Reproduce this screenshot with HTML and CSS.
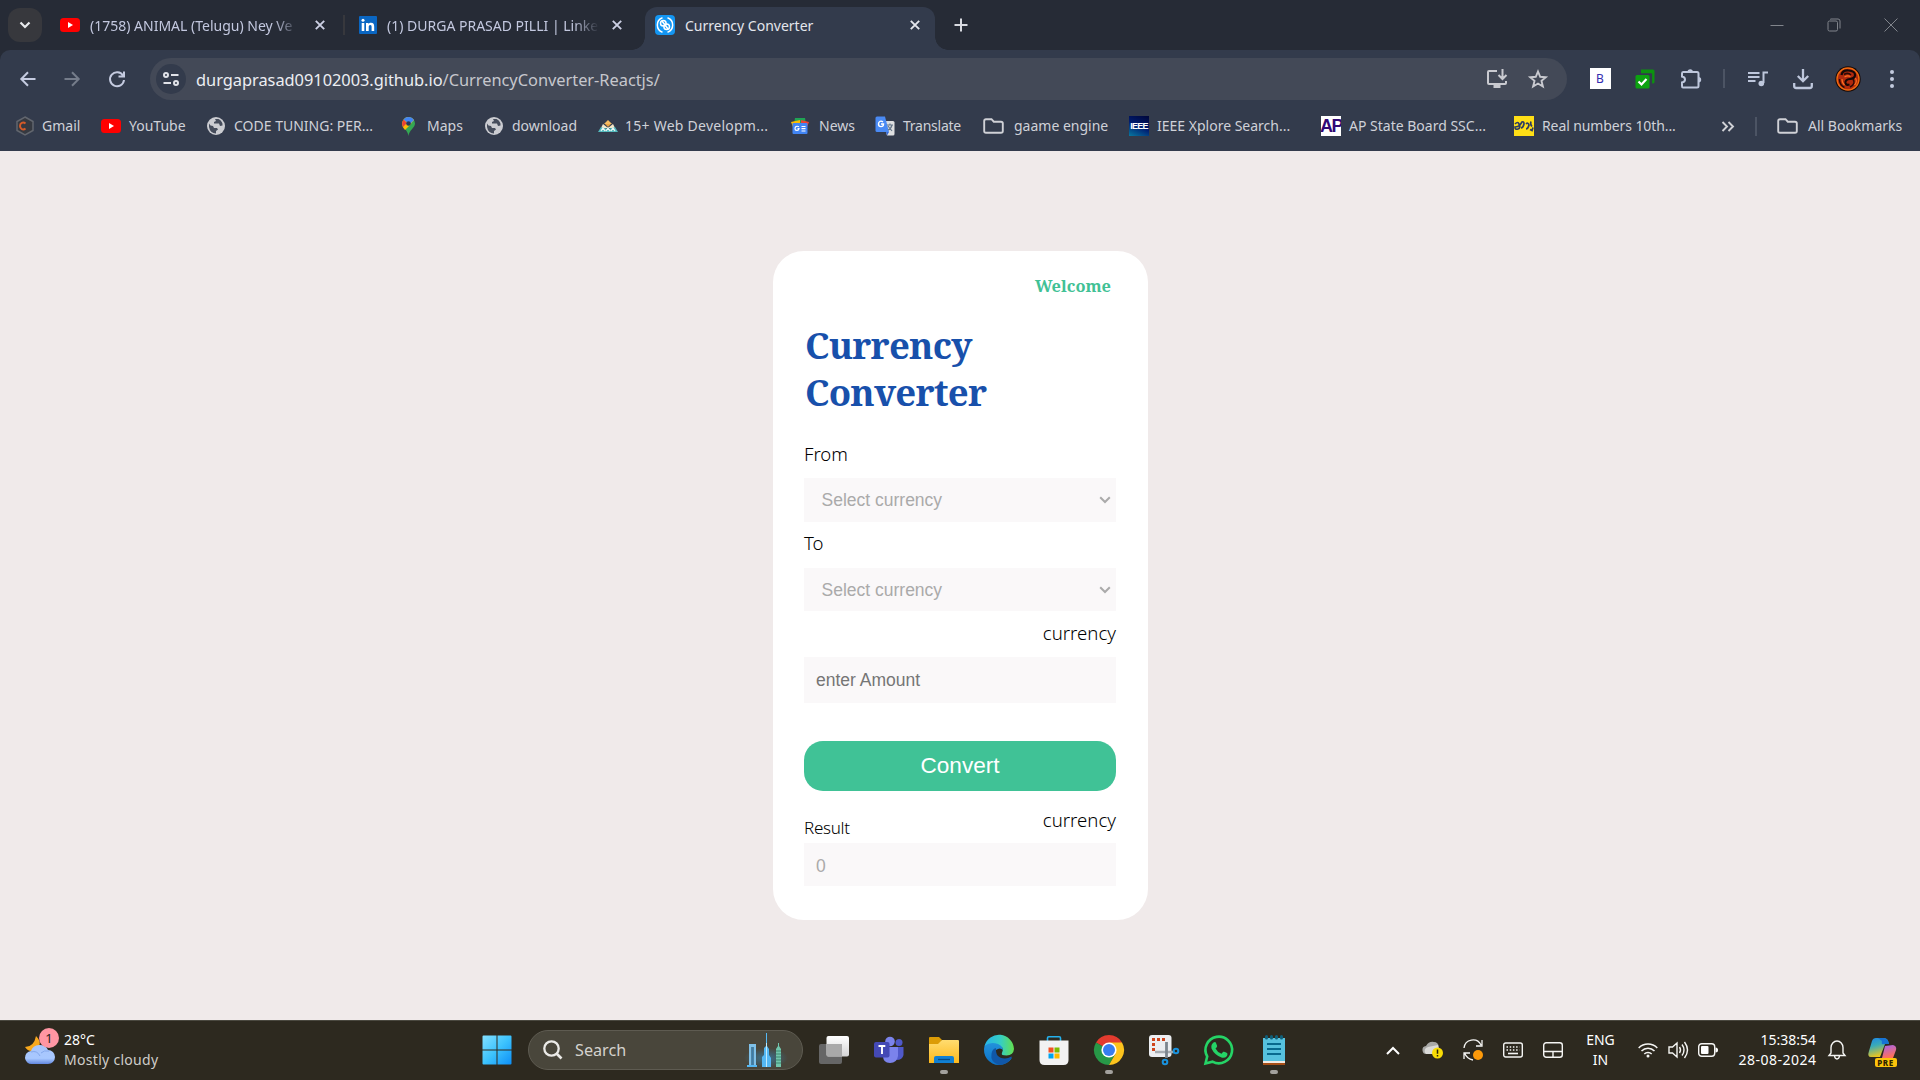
FILE: index.html
```
<!DOCTYPE html>
<html lang="en">
<head>
<meta charset="utf-8">
<title>Currency Converter</title>
<link rel="stylesheet" href="styles.css">
</head>
<body>
<div class="screen">
  <header class="browser">
    <div class="tabs">
      <button class="tab-search"><svg width="12" height="8" viewBox="0 0 12 8"><path d="M1.5 1.5 6 6l4.500-4.500" fill="none" stroke="#e8eaee" stroke-width="2.200"/></svg></button>
      <div class="tab tab-one">
        <svg class="yt" width="20" height="14" viewBox="0 0 20 14"><rect width="20" height="14" rx="3.500" fill="#f00"/><path d="M8 4v6l5-3z" fill="#fff"/></svg>
        <span class="tab-title fade">(1758) ANIMAL (Telugu) Ney Ve</span>
        <svg class="close" width="10" height="10" viewBox="0 0 10 10"><path d="m.8.8 8.400 8.400m0-8.400L.8 9.200" stroke="#ccd0e4" stroke-width="1.900"/></svg>
      </div>
      <div class="tab-sep"></div>
      <div class="tab tab-two">
        <svg width="18" height="18" viewBox="0 0 18 18"><rect width="18" height="18" rx="1" fill="#0a66c2"/><path d="M2.700 7h2.600v8H2.700zM7 7h2.500v1.200C10 7.300 11 6.800 12 6.800c2.500 0 3.200 1.500 3.200 3.900V15h-2.600v-3.900c0-1.100-.2-2-1.300-2s-1.600.8-1.600 2V15H7z" fill="#fff"/><circle cx="4" cy="4.200" r="1.500" fill="#fff"/></svg>
        <span class="tab-title fade">(1) DURGA PRASAD PILLI | Linke</span>
        <svg class="close" width="10" height="10" viewBox="0 0 10 10"><path d="m.8.8 8.400 8.400m0-8.400L.8 9.200" stroke="#ccd0e4" stroke-width="1.900"/></svg>
      </div>
      <div class="tab active">
        <svg width="20" height="20" viewBox="0 0 20 20"><rect width="20" height="20" rx="4" fill="#1496f3"/><g fill="none" stroke="#fff" stroke-width="1.500"><path d="M7.500 2.800A7.600 7.600 0 0 0 7.500 17.200M12.500 2.800a7.600 7.600 0 0 1 0 14.400"/><circle cx="8.300" cy="8.300" r="2.800"/><circle cx="11.700" cy="11.700" r="2.800"/><path d="m7 6 6 8"/></g></svg>
        <span class="tab-title">Currency Converter</span>
        <svg class="close" width="10" height="10" viewBox="0 0 10 10"><path d="m.8.8 8.400 8.400m0-8.400L.8 9.200" stroke="#e4e6ec" stroke-width="1.900"/></svg>
      </div>
      <svg class="new-tab" width="14" height="14" viewBox="0 0 14 14"><path d="M7 .5v13M.5 7h13" stroke="#d8dae0" stroke-width="2"/></svg>
      <div class="window-buttons">
        <svg width="14" height="14" viewBox="0 0 14 14"><path d="M.5 7.500h13"/></svg>
        <svg width="14" height="14" viewBox="0 0 14 14"><rect x="1" y="3" width="9.500" height="10" rx="1.500"/><path d="M3.500 1.500V1h7.500q2 0 2 2v7.500"/></svg>
        <svg width="14" height="14" viewBox="0 0 14 14"><path d="m.5.500 13 13m0-13L.5 13.500"/></svg>
      </div>
    </div>

    <div class="toolbar">
      <svg class="nav back" width="16" height="16" viewBox="0 0 16 16"><path d="M15.500 8H1.500M8 1.200 1.300 8 8 14.800"/></svg>
      <svg class="nav forward" width="16" height="16" viewBox="0 0 16 16"><path d="M.5 8h14M8 1.200 14.700 8 8 14.800"/></svg>
      <svg class="nav reload" width="16" height="16" viewBox="0 0 16 16"><path d="M14 4.500A7 7 0 1 0 15 9M15 .5v5h-5.500"/></svg>
      <div class="omnibox">
        <span class="site-info"><svg width="16" height="16" viewBox="0 0 16 16" fill="none" stroke="#e0e2e8" stroke-width="2"><circle cx="3" cy="4" r="2"/><path d="M8 4h7.500M.5 12H8"/><circle cx="13" cy="12" r="2"/></svg></span>
        <span class="url"><b>durgaprasad09102003.github.io</b>/CurrencyConverter-Reactjs/</span>
        <svg class="install" width="22" height="20" viewBox="0 0 22 20" fill="none" stroke="#c9cad0" stroke-width="2"><path d="M11 2H3Q2 2 2 3v11q0 1 1 1h16q1 0 1-1v-2M16.500 0v9.500M12.500 6l4 4 4-4"/><path d="M7.500 17.500h7" stroke-width="3"/></svg>
        <svg class="star" width="20" height="20" viewBox="0 0 20 20"><path d="m10 2.500 2.200 5.300 5.600.4-4.300 3.700 1.400 5.600-4.900-3-4.900 3 1.400-5.600L2.200 8.200l5.600-.4z" fill="none" stroke="#c9cad0" stroke-width="1.900"/></svg>
      </div>
      <div class="extensions">
        <span class="ext-b">B</span>
        <svg width="20" height="20" viewBox="0 0 20 20"><path d="M6 .5h12q1.500 0 1.500 1.500v11q0 1.500-3 1.500V4.500H6z" fill="#0c930f"/><path d="M4.500 5h12v12" fill="none" stroke="#333b4c" stroke-width="1.200"/><rect x=".5" y="6" width="14" height="13.500" rx="1.500" fill="#0ca210"/><path d="m3.500 12.500 3 3 5-5.500" stroke="#fff" stroke-width="2.200" fill="none"/></svg>
        <svg width="22" height="22" viewBox="0 0 22 22"><path d="M3 4h14q1.500 0 1.500 1.500V18q0 1.500-1.500 1.500H3Q2 19.500 2 18v-3.500c4-.5 4-5.500 0-6V5.500Q2 4 3 4z" fill="none" stroke="#bec7dc" stroke-width="2"/><path d="M7.500 4a2.700 2.700 0 0 1 5.400 0zM18.500 9a2.700 2.700 0 0 1 0 5.400z" fill="#bec7dc"/></svg>
        <i class="bar-sep"></i>
        <svg width="20" height="16" viewBox="0 0 20 16" stroke="#bec7dc" fill="none" stroke-width="2"><path d="M0 2h11.500M0 6h11.500M0 10h7.500M15.500 12V1.500H20"/><circle cx="13.300" cy="12.500" r="2.800" fill="#bec7dc" stroke="none"/></svg>
        <svg width="20" height="22" viewBox="0 0 20 22" stroke="#bec7dc" fill="none" stroke-width="2.300"><path d="M10 1v12M4.800 8 10 13.200 15.200 8M1.200 15v3q0 2 2 2h13.600q2 0 2-2v-3"/></svg>
        <svg width="26" height="26" viewBox="0 0 26 26"><circle cx="13" cy="13" r="12.700" fill="#160907"/><circle cx="13" cy="13" r="11" fill="#b02a0e" stroke="#f06a10" stroke-width="1.400"/><path d="M6.500 9q1-5 7-4.500 7 .5 6.500 5-.5 3-5 3.500-5 .5-4.500 4 .5 2.500 4 1.500" fill="none" stroke="#150807" stroke-width="2.200"/><path d="M4.500 13q0 6 5 8.500M18 13q3 5-3 8M9 8.500q4-2.500 7 .5" fill="none" stroke="#2a0b07" stroke-width="1.500"/><path d="M7 13q0 4 2.500 6M20.500 12q2 4-1 7M9.500 11q3-2 6-.5" fill="none" stroke="#ff7320" stroke-width="1.100"/></svg>
        <svg width="4" height="18" viewBox="0 0 4 18" fill="#c3cade"><circle cx="2" cy="2" r="2"/><circle cx="2" cy="9" r="2"/><circle cx="2" cy="16" r="2"/></svg>
      </div>
    </div>

    <nav class="bookmarks">
      <a><svg width="18" height="20" viewBox="0 0 18 20"><path d="m9 1 8 4.500v9L9 19l-8-4.500v-9z" fill="#363940" stroke="#62666e" stroke-width="1.500"/><path d="M9.500 7.500C7 5.500 4 7 4 10s3 4.500 5.500 2.500" fill="none" stroke="#d45a28" stroke-width="2"/></svg><span>Gmail</span></a>
      <a><svg width="20" height="14" viewBox="0 0 20 14"><rect width="20" height="14" rx="3.500" fill="#f00"/><path d="M8 4v6l5-3z" fill="#fff"/></svg><span>YouTube</span></a>
      <a><svg width="18" height="18" viewBox="0 0 18 18"><circle cx="9" cy="9" r="9" fill="#cbccd1"/><path d="M2 6.500q1 2.500 4 2.500l1 2h3l1 1.500-2 1.500v2.500Q3 16 2 10zM8 2l1 2-2 1v1.500h5l1 2.500 2.500-.5q.5-4-4-6.500z" fill="#454c5b"/></svg><span>CODE TUNING: PER...</span></a>
      <a><svg width="13" height="19" viewBox="0 0 13 19"><path d="M6.500 0A6.500 6.500 0 0 0 0 6.500C0 11 6 13 6.500 19 7 13 13 11 13 6.500A6.500 6.500 0 0 0 6.500 0z" fill="#34a853"/><path d="M2 2A6.500 6.500 0 0 1 12 3L8 8 3 13Q0 10 0 6z" fill="#fbbc04"/><path d="M1.500 2.500 5 6 1 10Q-1 6 1.500 2.500z" fill="#ea4335"/><path d="M1.500 2.500A6.500 6.500 0 0 1 12 3L8 7 4.500 5z" fill="#4285f4"/><circle cx="6.500" cy="6.500" r="2.300" fill="#263959"/></svg><span>Maps</span></a>
      <a><svg width="18" height="18" viewBox="0 0 18 18"><circle cx="9" cy="9" r="9" fill="#cbccd1"/><path d="M2 6.500q1 2.500 4 2.500l1 2h3l1 1.500-2 1.500v2.500Q3 16 2 10zM8 2l1 2-2 1v1.500h5l1 2.500 2.500-.5q.5-4-4-6.500z" fill="#454c5b"/></svg><span>download</span></a>
      <a><svg width="20" height="12" viewBox="0 0 20 12"><path d="m10 0 4 4H6z" fill="#f5bc63"/><path d="m5 4 5 4 5-4 2 4H3z" fill="#f5e8c7"/><path d="M7 4h6l-3 3z" fill="#e9a346"/><path d="m3 7 7 2 7-2 3 5H0z" fill="#53b8bd"/><path d="m3 11 2-3 2 3m1 0 2-3 2 3m1 0 2-3 2 3" fill="none" stroke="#e8f7f3" stroke-width="1.300"/></svg><span>15+ Web Developm...</span></a>
      <a><svg width="18" height="16" viewBox="0 0 18 16"><path d="M4 0h10l1 6H3z" fill="#20a454"/><path d="m0 4 9-2v7H2z" fill="#fbbc04"/><path d="m18 4-8-2v7h6z" fill="#ea4335"/><rect x="1.500" y="5" width="15" height="11" rx="1" fill="#4285f4"/><path d="M8 8.700C5.500 7.500 4 9 4 10.700c0 2 3.500 2.600 4 0H6.500M10.500 8.500h4M10.500 10.700h4M10.500 13h4" stroke="#fff" stroke-width="1.200" fill="none"/></svg><span>News</span></a>
      <a><svg width="20" height="20" viewBox="0 0 20 20"><path d="M8 5h10q1.500 0 1.500 1.500V18q0 1.500-1.500 1.500h-6z" fill="#dedfe1"/><path d="M2 .5h8L14 16H2Q.5 16 .5 14.500V2Q.5.5 2 .5z" fill="#4a8af4"/><path d="M8 6C5.500 4 3.500 6 3.500 8c0 3.500 5 3.500 5 0H6" fill="none" stroke="#fff" stroke-width="1.400"/><path d="M12 9h6m-3-1.500V9m2 0q-1 4-4 5m0-4 4 5" fill="none" stroke="#66778a" stroke-width="1.200"/><path d="m11 16 3 0-2 3.500z" fill="#3367d6"/></svg><span>Translate</span></a>
      <a><svg width="21" height="16" viewBox="0 0 21 16"><path d="M3 1.200h5.500l2.300 2.500H18q1.800 0 1.800 1.800V13q0 1.800-1.800 1.800H3q-1.800 0-1.800-1.800V3Q1.200 1.200 3 1.200z" fill="none" stroke="#d0d1d6" stroke-width="1.900"/></svg><span>gaame engine</span></a>
      <a><i class="fav ieee">IEEE</i><span>IEEE Xplore Search...</span></a>
      <a><i class="fav ap">AP</i><span>AP State Board SSC...</span></a>
      <a><i class="fav sakshi"><svg width="20" height="20" viewBox="0 0 20 20" fill="none" stroke="#2d3b64" stroke-width="1.700"><path d="M1 8q3-3 4 0 2 4-1 5-3 1-3-2 3 0 5-2l2-3q2-1 2 2-1 4-3 4M12 8q2-2 3 1-1 4-3 4M17 5.500q-1 3 1 5m-2 3 2 1 1-3"/></svg></i><span>Real numbers 10th...</span></a>
      <a><svg width="14" height="11" viewBox="0 0 14 11"><path d="M1.500 1 6 5.500 1.500 10M7.500 1 12 5.500 7.500 10" fill="none" stroke="#d0d1d6" stroke-width="1.900"/></svg></a>
      <i class="bar-sep"></i>
      <a><svg width="21" height="16" viewBox="0 0 21 16"><path d="M3 1.200h5.500l2.300 2.500H18q1.800 0 1.800 1.800V13q0 1.800-1.800 1.800H3q-1.800 0-1.800-1.800V3Q1.200 1.200 3 1.200z" fill="none" stroke="#d0d1d6" stroke-width="1.900"/></svg><span>All Bookmarks</span></a>
    </nav>
  </header>

  <main class="page">
    <form class="card">
      <p class="welcome">Welcome</p>
      <h1>Currency Converter</h1>
      <label class="label from">From</label>
      <div class="field select">Select currency<svg width="12" height="8" viewBox="0 0 12 8"><path d="M1.200 1.200 6 6l4.800-4.800" fill="none" stroke="#aaa" stroke-width="2"/></svg></div>
      <label class="label to">To</label>
      <div class="field select second">Select currency<svg width="12" height="8" viewBox="0 0 12 8"><path d="M1.200 1.200 6 6l4.800-4.800" fill="none" stroke="#aaa" stroke-width="2"/></svg></div>
      <span class="label unit">currency</span>
      <div class="field amount">enter Amount</div>
      <button class="convert" type="button">Convert</button>
      <div class="result-row"><label class="label result">Result</label><span class="label">currency</span></div>
      <div class="field output">0</div>
    </form>
  </main>

  <footer class="taskbar">
    <div class="weather">
      <div class="weather-icon">
        <svg width="30" height="30" viewBox="0 0 30 30"><defs><linearGradient id="cloud" x2="0" y2="1"><stop stop-color="#a9c6fb"/><stop offset=".7" stop-color="#a8c8ff"/><stop offset="1" stop-color="#6287df"/></linearGradient></defs><path d="M11 1q8 8-1 14Q4 18 0 12q9 0 11-11z" fill="#f8a81d"/><path d="M7 29a6.500 6.500 0 0 1-1-13 9 8 0 0 1 17-1 7 7 0 0 1 0 14z" fill="url(#cloud)"/><path d="M6 17q6-2 9 4m1-3q3-3 8-2" fill="none" stroke="#84a8ec"/></svg>
        <span class="badge">1</span>
      </div>
      <div class="weather-text"><span>28°C</span><span class="cond">Mostly cloudy</span></div>
    </div>
    <div class="apps">
      <svg class="start" width="30" height="30" viewBox="0 0 30 30"><defs><linearGradient id="win" gradientUnits="userSpaceOnUse" x2="30" y2="30"><stop stop-color="#86e1ff"/><stop offset=".5" stop-color="#3dc3fd"/><stop offset="1" stop-color="#0b8df7"/></linearGradient></defs><path d="M1.500.5H14.500v14H.5v-13q0-1 1-1zM15.500.5h13q1 0 1 1v13h-14zM.5 15.500H14.500v14H1.500q-1 0-1-1zM15.500 15.500h14v13q0 1-1 1h-13z" fill="url(#win)"/></svg>
      <div class="search">
        <svg width="20" height="20" viewBox="0 0 20 20" fill="none" stroke="#ebeae7" stroke-width="2.300"><circle cx="8.500" cy="8.500" r="7.200"/><path d="m13.500 13.500 5 5" stroke-width="2.600"/></svg>
        <span>Search</span>
        <svg class="city" width="46" height="34" viewBox="0 0 46 34"><defs><radialGradient id="glow"><stop stop-color="#2aa0e8" stop-opacity=".5"/><stop offset="1" stop-color="#2aa0e8" stop-opacity="0"/></radialGradient></defs><ellipse cx="22" cy="25" rx="22" ry="10" fill="url(#glow)"/><path d="M5 32V11h7v21H9.500V14h-2v18z" fill="#7fc0e8"/><path d="M7.500 14h2v18h-2z" fill="#3b7ca9"/><path d="M3 32h10v2H3zM18 34V24l2-2v-7l2-2V0h1v13l2 3v6l2 3v9z" fill="#54b8f4"/><path d="M22 10h1v24h-1z" fill="#c0ebff"/><path d="M32 34V16l2-3v-3h1v3l2 3v18z" fill="#71c6ad"/><path d="M32 18h5m-5 3h5m-5 3h5m-5 3h5m-5 3h5" stroke="#3e876f"/></svg>
      </div>
      <svg width="30" height="30" viewBox="0 0 30 30"><defs><linearGradient id="tv" x2="0" y2="1"><stop stop-color="#fff"/><stop offset="1" stop-color="#d4d4d4"/></linearGradient></defs><rect y="9" width="23" height="20" rx="2" fill="#666"/><rect x="7.500" y="1" width="22.500" height="20.500" rx="2" fill="url(#tv)"/><path d="M7.500 9H23v12.500H9q-1.500 0-1.500-1.500z" fill="#a9a9a9"/></svg>
      <svg width="30" height="30" viewBox="0 0 30 30"><circle cx="25" cy="7.500" r="3.500" fill="#5059c9"/><path d="M20 12h9.500v8q-1 5-7 5z" fill="#5059c9"/><circle cx="16" cy="6.500" r="4.800" fill="#7b83eb"/><path d="M9 12h15v9q-1 7-8 7t-7-7z" fill="#7b83eb"/><rect y="7" width="15.500" height="15.500" rx="2" fill="#4449b5"/><path d="M4.500 11h6.800M8 11v8" stroke="#fff" stroke-width="1.900"/></svg>
      <span class="running"><svg width="30" height="30" viewBox="0 0 30 30"><defs><linearGradient id="fold" x2="0" y2="1"><stop stop-color="#ffdc70"/><stop offset="1" stop-color="#fdb91c"/></linearGradient></defs><path d="M0 10V3q0-1 1-1h9l3 3-3 6z" fill="#dc9c06"/><path d="M0 28V9h9l4-4h16q1 0 1 1v22z" fill="url(#fold)"/><path d="M5 28v-5q0-2 2-2h16q2 0 2 2v5z" fill="#1180d3"/><path d="M9 24.500h12" stroke="#064b85" stroke-width="1.300"/></svg></span>
      <svg width="30" height="30" viewBox="0 0 30 30"><defs><linearGradient id="ed"><stop stop-color="#26b4ea"/><stop offset=".55" stop-color="#36cec3"/><stop offset="1" stop-color="#64e04d"/></linearGradient><linearGradient id="ed2" x2="0" y2="1"><stop stop-color="#2494dc"/><stop offset="1" stop-color="#0b71c8"/></linearGradient></defs><path d="M.5 11Q4 6 11 7q8 1 8 8-3-3-7 0-3 8 6 10 5 1 10-2-5 7-13 7A15 15 0 0 1 .5 11z" fill="url(#ed2)"/><path d="M.5 11A15 15 0 0 1 30 14q-.5 6-7.500 6.500-6 0-4.500-2.500 3-6-4-9Q6 6.500.5 11z" fill="url(#ed)"/><path d="M12 13q-1 10 9 10.500 3 0 6.500-2 .5 0 0 1.500Q23 30 15 30 6 27 7.500 19q.5-5 4.500-6z" fill="#1057a8"/></svg>
      <svg width="30" height="30" viewBox="0 0 30 30"><path d="M8.500 8V3q0-1.300 1.300-1.300h10.400q1.300 0 1.300 1.300v5" fill="none" stroke="#25b1ec" stroke-width="1.600"/><path d="M.5 5.500h29V25q0 5-5 5h-19q-5 0-5-5z" fill="#f2f2f2"/><path d="M9.500 12.500h5v5h-5z" fill="#f25022"/><path d="M15.500 12.500h5v5h-5z" fill="#7fba00"/><path d="M9.500 18.500h5v5h-5z" fill="#00a4ef"/><path d="M15.500 18.500h5v5h-5z" fill="#ffb900"/></svg>
      <span class="running"><svg width="30" height="30" viewBox="0 0 30 30"><path d="M15 15 2 7.500A15 15 0 0 1 28 7.500z" fill="#e33b2e"/><path d="M2 7.500A15 15 0 0 0 15 30l6.500-11.200L15 15z" fill="#279847"/><path d="M28 7.500A15 15 0 0 1 15 30l6.500-11.200L15 7.500z" fill="#fcc31d"/><circle cx="15" cy="15" r="7.600" fill="#fff"/><circle cx="15" cy="15" r="6" fill="#377df0"/></svg></span>
      <svg width="30" height="30" viewBox="0 0 30 30"><rect width="22.500" height="22" rx="3" fill="#eceef1"/><path d="M16 4.500H4.500V17" fill="none" stroke="#cf451c" stroke-width="3" stroke-dasharray="3 2"/><path d="M6 17h19" stroke="#a6acb2" stroke-width="2.500"/><path d="M17.500 7v16" stroke="#7c858e" stroke-width="2.800"/><g fill="none" stroke="#1992dd" stroke-width="2"><circle cx="27" cy="16" r="2.300"/><circle cx="16" cy="27" r="2.300"/></g></svg>
      <svg width="30" height="30" viewBox="0 0 30 30"><path d="M1.500 28.500 3.200 21.500A13.300 13.300 0 1 1 8.500 26.700z" fill="none" stroke="#25d366" stroke-width="2.600"/><path d="M9.500 7.500q2-1 2.500.5l1.200 3q0 1-1.700 2.500 2 4 6 5.300l1.700-2q.7-.6 3.800 1.300 1 .7 0 2.800-2 2.500-5.500 1.700-7-2.500-10-9-.8-4 2-6.100z" fill="#25d366"/></svg>
      <span class="running"><svg width="30" height="30" viewBox="0 0 30 30"><path d="M4 3h22v26H4z" fill="#56c1de"/><path d="M4 26h22v2H4z" fill="#f0e9e3"/><path d="M4 28h22v2H4z" fill="#a64e16"/><path d="M8 9h14M8 14h14M8 19h14" stroke="#08698e" stroke-width="2"/><path d="M7.500 1.500v1.500m5-1.500v1.500m5-1.500v1.500m5-1.500v1.500" stroke="#0f5f79" stroke-width="3" stroke-linecap="round"/></svg></span>
    </div>
    <div class="tray">
      <svg width="14" height="9" viewBox="0 0 14 9"><path d="M1 8l6-6 6 6" fill="none" stroke="#fff" stroke-width="2"/></svg>
      <svg class="cloud-warn" width="20" height="18" viewBox="0 0 20 18"><path d="M4 13a4 4 0 0 1-1-8q3-5 8-4 4 0 5 5v7z" fill="#a8a8a6"/><path d="M3 13a4 4 0 0 1 2-7l10-2v9z" fill="#dadad8"/><circle cx="14.500" cy="12" r="5.500" fill="#f9dc05"/><path d="M14.500 8.500v4.300m0 1.200v1.500" stroke="#27240b" stroke-width="1.500"/></svg>
      <svg width="20" height="22" viewBox="0 0 20 22"><path d="M1 9A9 9 0 0 1 18 6M19 1v6h-6M1 20v-6h6M1.500 14Q4 20 10 21" fill="none" stroke="#f5f5f3" stroke-width="1.300"/><circle cx="15" cy="16" r="5" fill="#fd9a0a"/></svg>
      <svg width="20" height="16" viewBox="0 0 20 16" fill="none" stroke="#f5f5f3"><rect x=".7" y="1" width="18.600" height="14" rx="2" stroke-width="1.400"/><path d="M3.500 5h13M3.500 8h13" stroke-width="1.700" stroke-dasharray="1.500 1.700"/><path d="M5 11.500h10" stroke-width="1.600"/></svg>
      <svg width="20" height="16" viewBox="0 0 20 16" fill="none" stroke="#f5f5f3" stroke-width="1.400"><rect x=".7" y=".7" width="18.600" height="14.600" rx="2.500"/><path d="M1 9.500h18M10 9.500V15"/></svg>
      <div class="lang"><span>ENG</span><span>IN</span></div>
      <svg class="wifi" width="20" height="16" viewBox="0 0 20 16" fill="none" stroke="#f5f5f3" stroke-width="1.500"><path d="M.7 6a13 13 0 0 1 18.600 0M3.500 9a9 9 0 0 1 13 0M6.300 12a5.200 5.200 0 0 1 7.400 0"/><circle cx="10" cy="14" r="1.500" fill="#f5f5f3" stroke="none"/></svg>
      <svg class="sound" width="20" height="18" viewBox="0 0 20 18" fill="none" stroke="#f5f5f3" stroke-width="1.400"><path d="M1 6h3.500L9 2v14l-4.500-4H1zM11.500 6q2 3 0 6M14 3.500q4 5.500 0 11M16.500 1q6 8 0 16"/></svg>
      <svg class="battery" width="20" height="14" viewBox="0 0 20 14"><rect x=".7" y=".7" width="16" height="12.600" rx="3" fill="none" stroke="#f5f5f3" stroke-width="1.400"/><rect x="3" y="3" width="7.500" height="8" rx="1" fill="#fff"/><path d="M17.500 4.500q2.500 0 2.500 2.500t-2.500 2.500z" fill="#fff"/></svg>
      <div class="clock"><span>15:38:54</span><span class="date">28-08-2024</span></div>
      <svg class="bell" width="18" height="20" viewBox="0 0 18 20" fill="none" stroke="#f5f5f3" stroke-width="1.400"><path d="M3 13V7.500a6 6.500 0 0 1 12 0V13l2 2.500H1zM6.500 16q.5 3 2.500 3t2.500-3"/></svg>
      <div class="copilot">
        <svg width="28" height="24" viewBox="0 0 28 24"><defs><linearGradient id="cp" x2=".3" y2="1"><stop stop-color="#1c86e8"/><stop offset=".45" stop-color="#3aabb7"/><stop offset="1" stop-color="#e9c520"/></linearGradient><linearGradient id="cp2" x2=".3" y2="1"><stop stop-color="#a463ef"/><stop offset="1" stop-color="#ff7059"/></linearGradient></defs><path d="M8 0h8q4 0 5 6h-4l-5 13H3q-4 0-2-6L4 3q1-3 4-3z" fill="url(#cp)"/><path d="M10 0h6q4 0 5 6h-5q-3 1-2-3z" fill="#1773d5"/><path d="m17 8 8-1q4 1 3 5l-3 8H14z" fill="url(#cp2)"/></svg>
        <span class="pre">PRE</span>
      </div>
    </div>
  </footer>
</div>
</body>
</html>
```
FILE: styles.css
```
* { box-sizing: border-box; }
body { margin: 0; background: #f0eaea; font-family: "Noto Sans", "Open Sans", sans-serif; }
svg { display: block; flex: none; overflow: visible; }
i { font-style: normal; }
.screen { width: 1920px; height: 1080px; display: flex; flex-direction: column; overflow: hidden; }

/* Browser chrome */
.browser { background: #262b36; height: 151px; font-size: 14px; color: #cfd1d8; }
.tabs { height: 50px; display: flex; align-items: center; padding-left: 8px; }
.tab-search { width: 34px; height: 34px; border: 0; border-radius: 12px; background: #37383d; display: grid; place-items: center; padding: 0; }
.tab { display: flex; align-items: center; white-space: nowrap; }
.tab-one { width: 301px; padding-left: 18px; }
.tab-two { width: 300px; padding-left: 14px; }
.tab-title { color: #c3c8df; width: 209px; margin-left: 10px; }
.tab-two .tab-title { width: 212px; }
.fade { mask-image: linear-gradient(90deg, #000 88%, transparent 100%); -webkit-mask-image: linear-gradient(90deg, #000 88%, transparent 100%); }
.tab .close { margin-left: 16px; }
.tab-two .close { margin-left: 13px; }
.tab-sep { width: 2px; height: 20px; background: #37383d; }
.tab.active { position: relative; width: 290px; height: 43px; align-self: flex-end; background: #333b4c; border-radius: 12px 12px 0 0; padding: 0 0 7px 10px; }
.active .tab-title { color: #e4e6ec; width: auto; }
.active .close { margin-left: auto; margin-right: 15px; }
.tab.active::before, .tab.active::after { content: ""; position: absolute; bottom: 0; width: 13px; height: 13px; }
.tab.active::before { right: 100%; background: radial-gradient(circle at 0 0, transparent 12.5px, #333b4c 13px); }
.tab.active::after { left: 100%; background: radial-gradient(circle at 100% 0, transparent 12.5px, #333b4c 13px); }
.new-tab { margin-left: 19px; }
.window-buttons { display: flex; gap: 43px; margin-left: auto; margin-right: 22px; }
.window-buttons svg { fill: none; stroke: #81858c; }

.toolbar { height: 51px; display: flex; align-items: center; padding: 6px 0 0 20px; background: #333b4c; border-radius: 10px 10px 0 0; }
.nav { fill: none; stroke: #c5cbe0; stroke-width: 2; }
.nav.forward { stroke: #757c8a; margin-left: 28px; }
.nav.reload { margin-left: 29px; }
.omnibox { width: 1417px; height: 42px; margin-left: 25px; border-radius: 21px; background: #434957; display: flex; align-items: center; padding: 0 19px 0 6px; }
.site-info { width: 30px; height: 30px; border-radius: 50%; background: #333b4c; display: grid; place-items: center; }
.url { margin-left: 10px; padding-top: 1px; font-size: 16.4px; letter-spacing: -0.03px; color: #c6c7cd; white-space: nowrap; }
.url b { font-weight: 400; color: #eceef2; }
.install { margin-left: auto; }
.star { margin-left: 20px; }
.extensions { display: grid; flex: 1; align-items: center; justify-items: center; grid-template-columns: 46px 44px 47px 20px 48px 42px 47px 42px; margin-left: 10px; }
.ext-b { width: 21px; height: 21px; background: #fff; color: #342cb0; font-size: 12px; line-height: 21px; text-align: center; }
.bar-sep { width: 2px; height: 19px; background: #4c5464; }

.bookmarks { height: 50px; background: #333b4c; display: grid; align-items: center; padding-left: 16px;
  grid-template-columns: 85px 106px 195px 83px 113px 193px 84px 108px 146px 192px 193px 207px 34px 22px 1fr; }
.bookmarks a { display: flex; align-items: center; white-space: nowrap; gap: 8px; }
.bookmarks span { margin-top: -2px; }
.bookmarks a:nth-child(3), .bookmarks a:nth-child(5) { gap: 9px; }
.bookmarks a:nth-child(4) { gap: 12px; }
.bookmarks a:nth-child(6) { letter-spacing: 0.25px; gap: 7px; }
.bookmarks a:nth-child(7), .bookmarks a:nth-child(9), .bookmarks a:nth-child(15) { gap: 10px; }
.bookmarks a:nth-child(8) { letter-spacing: -0.25px; }
.bookmarks a:nth-child(12) { letter-spacing: -0.1px; }
.fav { width: 20px; height: 20px; flex: none; overflow: hidden; display: flex; justify-content: center; align-items: center; font-family: "Liberation Sans", sans-serif; font-weight: 700; }
.ieee { background: linear-gradient(25deg, #0878a0, #001c70 50%, #000638); color: #fff; font-size: 9px; letter-spacing: -0.8px; }
.ap { background: #fff; color: #320875; font-size: 18px; letter-spacing: -1.5px; }
.sakshi { background: #ffdf16; }

/* Converter page */
.page { flex: 1; padding: 100px 0 0 1px; }
.card { width: 375px; height: 669px; margin: 0 auto; padding: 22px 32px 0 31px; border-radius: 31px; background: #fff; display: flex; flex-direction: column; }
.welcome { margin: 0 5px 0 0; font: 700 16.4px/25px "Noto Serif", serif; text-align: right; color: #41c195; }
h1 { margin: 24px 0 0; padding-left: 1px; font: 700 36.6px/47px "Noto Serif", serif; letter-spacing: -0.8px; color: #1850ab; }
.label { font-size: 18.6px; line-height: 28px; font-weight: 300; color: #000; }
.from { margin-top: 24px; }
.to { margin-top: 7px; }
.unit { margin-top: 8px; align-self: flex-end; }
.field { flex: none; background: #faf8f9; font: 17.5px "Liberation Sans", Arial, sans-serif; color: #aaa; display: flex; align-items: center; padding-left: 12px; height: 43px; }
.select { margin-top: 10px; height: 44px; padding: 0 5px 0 17.5px; justify-content: space-between; }
.second { margin-top: 11px; height: 43px; padding-top: 1px; }
.amount { margin-top: 10px; height: 46px; color: #757575; }
.output { padding-top: 3px; }
.convert { flex: none; margin: 38px 0 0; height: 50px; border: 0; border-radius: 19px; background: #40c296; color: #fff; font: 22.6px "Liberation Sans", Arial, sans-serif; padding: 0 0 1px; }
.result-row { display: flex; justify-content: space-between; height: 37px; margin-top: 15px; }
.result { margin-top: 8px; font-size: 17px; letter-spacing: -0.3px; }

/* Taskbar */
.taskbar { height: 60px; background: #2d291f; border-top: 1px solid #4a483f; color: #fff; font-size: 14px; display: grid; grid-template-columns: 469px 850px 601px; align-items: center; }
.weather { display: flex; padding-left: 25px; gap: 9px; align-items: center; margin-top: -2px; }
.weather-icon { position: relative; }
.badge { position: absolute; left: 14px; top: -7px; width: 20px; height: 20px; border-radius: 50%; background: #ff96a3; color: #29211c; font-size: 13px; line-height: 20px; text-align: center; }
.weather-text { display: flex; flex-direction: column; line-height: 20px; }
.cond { color: #cfcdc9; letter-spacing: 0.3px; }
.apps { display: grid; grid-template-columns: 55px 282px repeat(9, 55px); align-items: center; justify-items: center; margin-top: -1px; }
.search { width: 275px; height: 40px; margin-left: 1px; border: 1px solid #5e5b51; border-radius: 20px; background: #49463b; display: flex; align-items: center; padding: 0 12px 0 14px; font-size: 16.2px; color: #d4d2cd; gap: 12px; }
.city { margin-left: auto; }
.running { position: relative; }
.running::after { content: ""; position: absolute; left: 11px; top: 35px; width: 8px; height: 4px; border-radius: 2px; background: #a3a19d; }
.tray { display: grid; align-items: center; justify-items: center; padding-left: 54px; margin-top: -1px; grid-template-columns: 40px 40px 40px 40px 39px 57px 38px 22px 38px 91px 37px 53px; }
.lang { display: flex; flex-direction: column; align-items: center; line-height: 20px; }
.clock { justify-self: end; display: flex; flex-direction: column; align-items: flex-end; line-height: 20px; margin: -1px 2px 0 0; }
.date { letter-spacing: 0.5px; margin-right: -0.5px; }
.copilot { position: relative; }
.pre { position: absolute; left: 7px; top: 20px; width: 22px; height: 9px; border-radius: 2px; background: #fdc40b; color: #2d2100; font-weight: 800; font-size: 8px; line-height: 9px; letter-spacing: 0.6px; text-align: center; }
```
